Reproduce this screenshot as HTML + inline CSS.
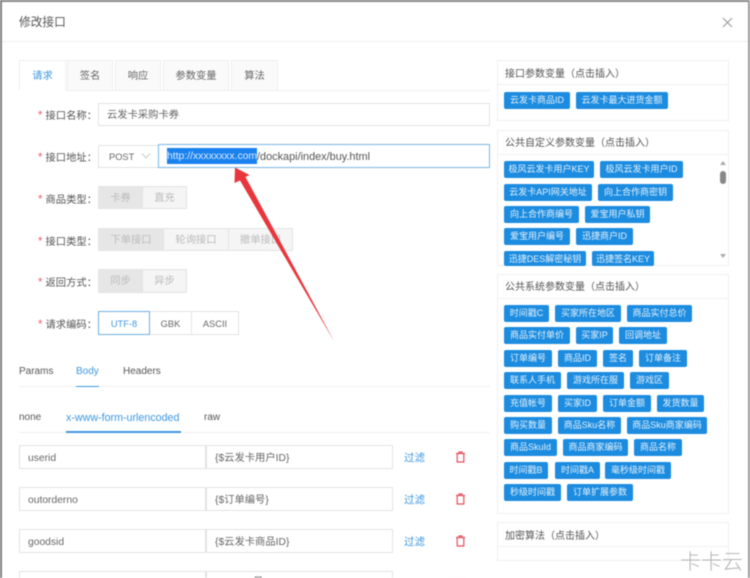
<!DOCTYPE html>
<html lang="zh-CN"><head><meta charset="utf-8"><title>修改接口</title>
<style>
html,body{margin:0;padding:0;width:750px;height:578px;overflow:hidden;background:#fff}
body{position:relative;font-family:"Liberation Sans","Noto Sans CJK SC",sans-serif;font-size:10.3px;color:#555}
#w{position:absolute;left:0;top:0;width:750px;height:578px;overflow:hidden;filter:blur(.45px)}
#w div,#w svg{position:absolute;box-sizing:border-box}
.bx{border:1px solid #e3e3e3;background:#fff;line-height:23px;color:#666}
.t{white-space:nowrap;line-height:16px}
.lab{width:85px;text-align:right;left:12px;color:#555;line-height:16px;white-space:nowrap}
.lab i{color:#e4606d;font-style:normal;margin-right:3px;font-size:11.5px}
.tab{top:60px;height:31px;border:1px solid #eee;background:#fafafa;text-align:center;line-height:32px;color:#666}
.dis{background:#f5f5f5;color:#bbb;text-align:center;border:1px solid #e3e3e3}
.on{background:#e6e6e6}
.p{left:497px;width:232px;border:1px solid #f0f0f0;background:#fff}
.ph{left:505px;color:#555;line-height:16px;white-space:nowrap;font-size:10px}
.hl{left:497px;width:232px;height:1px;background:#f0f0f0}
.g{height:17px;background:#1c8ce0;color:#e4f1fb;text-align:center;line-height:17px;border-radius:2px;white-space:nowrap;overflow:hidden;font-size:9px}
.in{font-size:10.3px;padding-left:8px}
.f{left:404px;color:#3d97e0;line-height:16px;font-size:10.5px}
.c{font-size:9.3px}
.n{font-size:10px}
</style></head><body><div id="w">
<div style="left:0;top:0;width:750px;height:2px;background:#8a8a8a"></div>
<div style="left:0;top:0;width:2px;height:578px;background:#7f7f7f"></div>
<div style="left:748px;top:0;width:2px;height:578px;background:#9a9a9a"></div>

<div class="t" style="left:19px;top:15px;font-size:11.7px;color:#555">修改接口</div>
<div style="left:2px;top:41px;width:746px;height:1px;background:#eee"></div>
<svg style="left:722px;top:17px" width="11" height="11" viewBox="0 0 11 11"><path d="M1 1L10 10M10 1L1 10" stroke="#999" stroke-width="1.1" fill="none"/></svg>

<div style="left:19px;top:90px;width:471px;height:1px;background:#eee"></div>
<div class="tab" style="left:19px;width:47px;background:#fff;border-bottom-color:#fff;color:#3d97e0">请求</div>
<div class="tab" style="left:67px;width:46px">签名</div>
<div class="tab" style="left:115px;width:46px">响应</div>
<div class="tab" style="left:163px;width:66px">参数变量</div>
<div class="tab" style="left:231px;width:47px">算法</div>

<div class="lab" style="top:108px"><i>*</i>接口名称：</div>
<div class="bx in" style="left:98px;top:103px;width:392px;height:23px">云发卡采购卡券</div>

<div class="lab" style="top:150px"><i>*</i>接口地址：</div>
<div class="bx c" style="left:98px;top:145px;width:61px;height:23px;padding-left:10px">POST</div>
<svg style="left:141px;top:152px" width="10" height="8" viewBox="0 0 10 8"><path d="M1 1.5L5 6L9 1.5" stroke="#ccc" fill="none"/></svg>
<div style="left:158px;top:144px;width:332px;height:24px;border:1px solid #79b8e8;background:#fff"></div>
<div style="left:167px;top:148px;width:90px;height:16px;background:#1a82ee"></div>
<div class="t" style="left:167px;top:149px;color:#dcecff;font-size:10.4px">http://xxxxxxxx.com</div>
<div class="t" style="left:257px;top:149px;color:#555;font-size:10.9px">/dockapi/index/buy.html</div>

<div class="lab" style="top:192px"><i>*</i>商品类型：</div>
<div class="dis on" style="left:98px;top:186px;width:45px;height:23px;line-height:23px">卡券</div>
<div class="dis" style="left:142px;top:186px;width:45px;height:23px;line-height:23px">直充</div>

<div class="lab" style="top:234px"><i>*</i>接口类型：</div>
<div class="dis on" style="left:98px;top:228px;width:66px;height:23px;line-height:23px">下单接口</div>
<div class="dis" style="left:163px;top:228px;width:66px;height:23px;line-height:23px">轮询接口</div>
<div class="dis" style="left:228px;top:228px;width:65px;height:23px;line-height:23px">撤单接口</div>

<div class="lab" style="top:275px"><i>*</i>返回方式：</div>
<div class="dis on" style="left:98px;top:269px;width:45px;height:24px;line-height:24px">同步</div>
<div class="dis" style="left:142px;top:269px;width:45px;height:24px;line-height:24px">异步</div>

<div class="lab" style="top:317px"><i>*</i>请求编码：</div>
<div class="bx c" style="left:149px;top:311px;width:43px;height:24px;text-align:center;line-height:24px">GBK</div>
<div class="bx c" style="left:191px;top:311px;width:48px;height:24px;text-align:center;line-height:24px">ASCII</div>
<div class="bx c" style="left:98px;top:311px;width:52px;height:24px;text-align:center;line-height:24px;border-color:#6fb1e4;color:#3d97e0">UTF-8</div>

<div style="left:19px;top:386px;width:471px;height:1px;background:#f0f0f0"></div>
<div class="t n" style="left:19px;top:364px">Params</div>
<div class="t n" style="left:76px;top:364px;color:#3d97e0">Body</div>
<div class="t n" style="left:123px;top:364px">Headers</div>
<div style="left:76px;top:386px;width:23px;height:1px;background:#3d97e0"></div>

<div style="left:19px;top:432px;width:471px;height:1px;background:#f0f0f0"></div>
<div class="t n" style="left:19px;top:410px">none</div>
<div class="t" style="left:66px;top:410px;color:#3d97e0;font-size:10.7px">x-www-form-urlencoded</div>
<div class="t n" style="left:204px;top:410px">raw</div>
<div style="left:66px;top:431px;width:115px;height:2px;background:#3d97e0"></div>

<div class="bx in" style="left:19px;top:445px;width:187px;height:24px;line-height:25px">userid</div>
<div class="bx in" style="left:206px;top:445px;width:187px;height:24px;line-height:25px">{$云发卡用户ID}</div>
<div class="f" style="top:450px">过滤</div>
<svg style="left:455px;top:451px" width="11" height="12" viewBox="0 0 11 12"><path d="M1 2.5H10M4 2.5V1H7V2.5M2.2 2.5V11H8.8V2.5" stroke="#e4505a" stroke-width="1.2" fill="none"/></svg>

<div class="bx in" style="left:19px;top:487px;width:187px;height:24px;line-height:25px">outorderno</div>
<div class="bx in" style="left:206px;top:487px;width:187px;height:24px;line-height:25px">{$订单编号}</div>
<div class="f" style="top:492px">过滤</div>
<svg style="left:455px;top:493px" width="11" height="12" viewBox="0 0 11 12"><path d="M1 2.5H10M4 2.5V1H7V2.5M2.2 2.5V11H8.8V2.5" stroke="#e4505a" stroke-width="1.2" fill="none"/></svg>

<div class="bx in" style="left:19px;top:529px;width:187px;height:24px;line-height:25px">goodsid</div>
<div class="bx in" style="left:206px;top:529px;width:187px;height:24px;line-height:25px">{$云发卡商品ID}</div>
<div class="f" style="top:534px">过滤</div>
<svg style="left:455px;top:535px" width="11" height="12" viewBox="0 0 11 12"><path d="M1 2.5H10M4 2.5V1H7V2.5M2.2 2.5V11H8.8V2.5" stroke="#e4505a" stroke-width="1.2" fill="none"/></svg>

<div class="bx in" style="left:19px;top:571px;width:187px;height:24px;line-height:22px"></div>
<div class="bx in" style="left:206px;top:571px;width:187px;height:24px;line-height:22px"></div>
<div class="t" style="left:253px;top:575px;color:#666">量</div>
<svg style="left:455px;top:576px" width="11" height="6" viewBox="0 0 11 6"><path d="M1 2.5H10" stroke="#f0b0b5" stroke-width="1.2" fill="none"/></svg>

<svg style="left:0;top:0" width="750" height="578" viewBox="0 0 750 578"><polygon points="235,167.5 249.5,175 245.5,177 334.5,342 240,180.5 234.5,183" fill="#e8363c"/></svg>

<!-- right panels -->
<div class="p" style="top:60px;height:61px"></div><div class="hl" style="top:84px"></div>
<div class="ph" style="top:67px">接口参数变量（点击插入）</div>
<div class="g" style="left:504px;top:92px;width:66px">云发卡商品ID</div>
<div class="g" style="left:576px;top:92px;width:92px">云发卡最大进货金额</div>

<div class="p" style="top:130px;height:136px"></div><div class="hl" style="top:154px"></div>
<div class="ph" style="top:136px">公共自定义参数变量（点击插入）</div>
<div class="g" style="left:504px;top:161px;width:90px">极风云发卡用户KEY</div>
<div class="g" style="left:600px;top:161px;width:83px">极风云发卡用户ID</div>
<div class="g" style="left:504px;top:184px;width:88px">云发卡API网关地址</div>
<div class="g" style="left:598px;top:184px;width:75px">向上合作商密钥</div>
<div class="g" style="left:504px;top:206px;width:75px">向上合作商编号</div>
<div class="g" style="left:585px;top:206px;width:65px">爱宝用户私钥</div>
<div class="g" style="left:504px;top:228px;width:66px">爱宝用户编号</div>
<div class="g" style="left:576px;top:228px;width:57px">迅捷商户ID</div>
<div class="g" style="left:504px;top:251px;width:82px;height:15px">迅捷DES解密秘钥</div>
<div class="g" style="left:592px;top:251px;width:62px;height:15px">迅捷签名KEY</div>
<div style="left:720px;top:171px;width:6px;height:13px;background:#888;border-radius:3px"></div>
<svg style="left:720px;top:161px" width="6" height="5" viewBox="0 0 6 5"><path d="M3 0L6 4H0Z" fill="#aaa"/></svg>
<svg style="left:720px;top:254px" width="6" height="5" viewBox="0 0 6 5"><path d="M0 0H6L3 4Z" fill="#aaa"/></svg>

<div class="p" style="top:274px;height:240px"></div><div class="hl" style="top:298px"></div>
<div class="ph" style="top:280px">公共系统参数变量（点击插入）</div>
<div class="g" style="left:504px;top:305px;width:45px">时间戳C</div>
<div class="g" style="left:555px;top:305px;width:66px">买家所在地区</div>
<div class="g" style="left:627px;top:305px;width:65px">商品实付总价</div>
<div class="g" style="left:504px;top:327px;width:66px">商品实付单价</div>
<div class="g" style="left:576px;top:327px;width:37px">买家IP</div>
<div class="g" style="left:619px;top:327px;width:48px">回调地址</div>
<div class="g" style="left:504px;top:350px;width:48px">订单编号</div>
<div class="g" style="left:558px;top:350px;width:39px">商品ID</div>
<div class="g" style="left:603px;top:350px;width:30px">签名</div>
<div class="g" style="left:639px;top:350px;width:48px">订单备注</div>
<div class="g" style="left:504px;top:372px;width:57px">联系人手机</div>
<div class="g" style="left:567px;top:372px;width:57px">游戏所在服</div>
<div class="g" style="left:630px;top:372px;width:39px">游戏区</div>
<div class="g" style="left:504px;top:395px;width:48px">充值帐号</div>
<div class="g" style="left:558px;top:395px;width:39px">买家ID</div>
<div class="g" style="left:603px;top:395px;width:48px">订单金额</div>
<div class="g" style="left:657px;top:395px;width:47px">发货数量</div>
<div class="g" style="left:504px;top:417px;width:48px">购买数量</div>
<div class="g" style="left:558px;top:417px;width:63px">商品Sku名称</div>
<div class="g" style="left:627px;top:417px;width:80px">商品Sku商家编码</div>
<div class="g" style="left:504px;top:439px;width:53px">商品SkuId</div>
<div class="g" style="left:563px;top:439px;width:65px">商品商家编码</div>
<div class="g" style="left:634px;top:439px;width:48px">商品名称</div>
<div class="g" style="left:504px;top:462px;width:44px">时间戳B</div>
<div class="g" style="left:555px;top:462px;width:45px">时间戳A</div>
<div class="g" style="left:605px;top:462px;width:66px">毫秒级时间戳</div>
<div class="g" style="left:504px;top:484px;width:57px">秒级时间戳</div>
<div class="g" style="left:567px;top:484px;width:66px">订单扩展参数</div>

<div class="p" style="top:522px;height:39px"></div><div class="hl" style="top:546px"></div>
<div class="ph" style="top:529px">加密算法（点击插入）</div>

<div class="t" style="left:680px;top:552px;font-size:21px;line-height:22px;color:#b5b5b5;font-weight:300">卡卡云</div>
</div></body></html>
